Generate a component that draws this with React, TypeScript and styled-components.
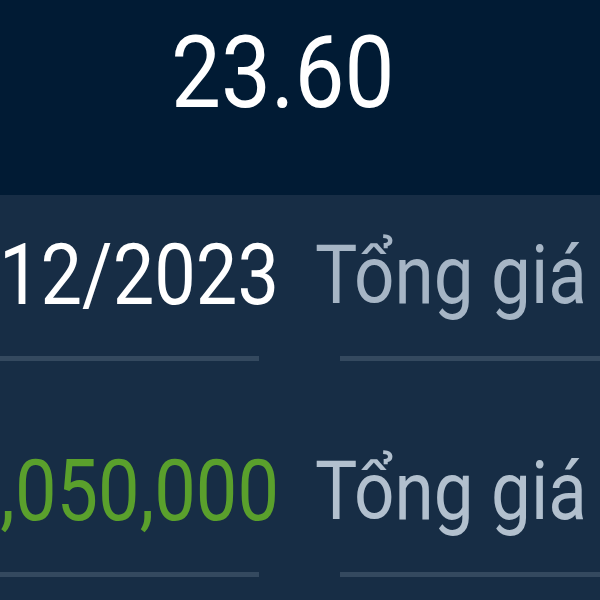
import React from 'react';
import styled, { createGlobalStyle } from 'styled-components';

const GlobalStyle = createGlobalStyle`
  html, body {
    margin: 0;
    padding: 0;
    background-color: #172d45;
  }
  body {
    width: 600px;
    height: 600px;
    overflow: hidden;
    font-family: Roboto, 'Noto Sans', sans-serif;
  }
`;

const Screen = styled.div`
  width: 600px;
  height: 600px;
  overflow: hidden;
  background-color: #172d45;
`;

const Header = styled.header`
  height: 195px;
  box-sizing: border-box;
  padding: 23px 0 0 171px;
  background-color: #011b34;
`;

const Total = styled.div`
  color: #ffffff;
  font-size: 89px;
  line-height: 107px;
  transform: scaleY(1.12);
  transform-origin: 50% 78%;
`;

const Body = styled.section`
  display: flex;
  flex-direction: column;
  gap: 91px;
  padding-top: 41px;
`;

const Row = styled.div`
  display: grid;
  grid-template-columns: minmax(0, 1fr) minmax(0, 1fr);
`;

const Cell = styled.div<{ $side: 'left' | 'right' }>`
  display: flex;
  flex-direction: column;
  align-items: ${(p) => (p.$side === 'left' ? 'flex-end' : 'flex-start')};
  gap: 35px;
  min-width: 0;
`;

const CellText = styled.div<{ $side: 'left' | 'right'; $color: string }>`
  display: flex;
  justify-content: ${(p) => (p.$side === 'left' ? 'flex-end' : 'flex-start')};
  width: 100%;
  box-sizing: border-box;
  padding: ${(p) => (p.$side === 'left' ? '0 21px 0 0' : '0 0 0 15px')};
  white-space: nowrap;
  color: ${(p) => p.$color};
  font-size: ${(p) => (p.$side === 'left' ? '74px' : '71px')};
  line-height: 85px;
  transform: scaleY(1.15);
  transform-origin: 50% 80%;
`;

const Divider = styled.div<{ $side: 'left' | 'right' }>`
  align-self: stretch;
  height: 5px;
  background-color: #34495f;
  margin: ${(p) => (p.$side === 'left' ? '0 41px 0 0' : '0 0 0 40px')};
`;

interface LineItem {
  value: string;
  valueColor: string;
  label: string;
  labelColor: string;
}

const ITEMS: LineItem[] = [
  { value: '25/12/2023', valueColor: '#ffffff', label: 'Tổng giá', labelColor: '#a6b5c5' },
  { value: '1,050,000', valueColor: '#5aa02c', label: 'Tổng giá', labelColor: '#b2c0ce' },
];

function App(): JSX.Element {
  return (
    <>
      <GlobalStyle />
      <Screen>
        <Header>
          <Total>23.60</Total>
        </Header>
        <Body>
          {ITEMS.map((item, i) => (
            <Row key={i}>
              <Cell $side="left">
                <CellText $side="left" $color={item.valueColor}>
                  {item.value}
                </CellText>
                <Divider $side="left" />
              </Cell>
              <Cell $side="right">
                <CellText $side="right" $color={item.labelColor}>
                  {item.label}
                </CellText>
                <Divider $side="right" />
              </Cell>
            </Row>
          ))}
        </Body>
      </Screen>
    </>
  );
}

export default App;
